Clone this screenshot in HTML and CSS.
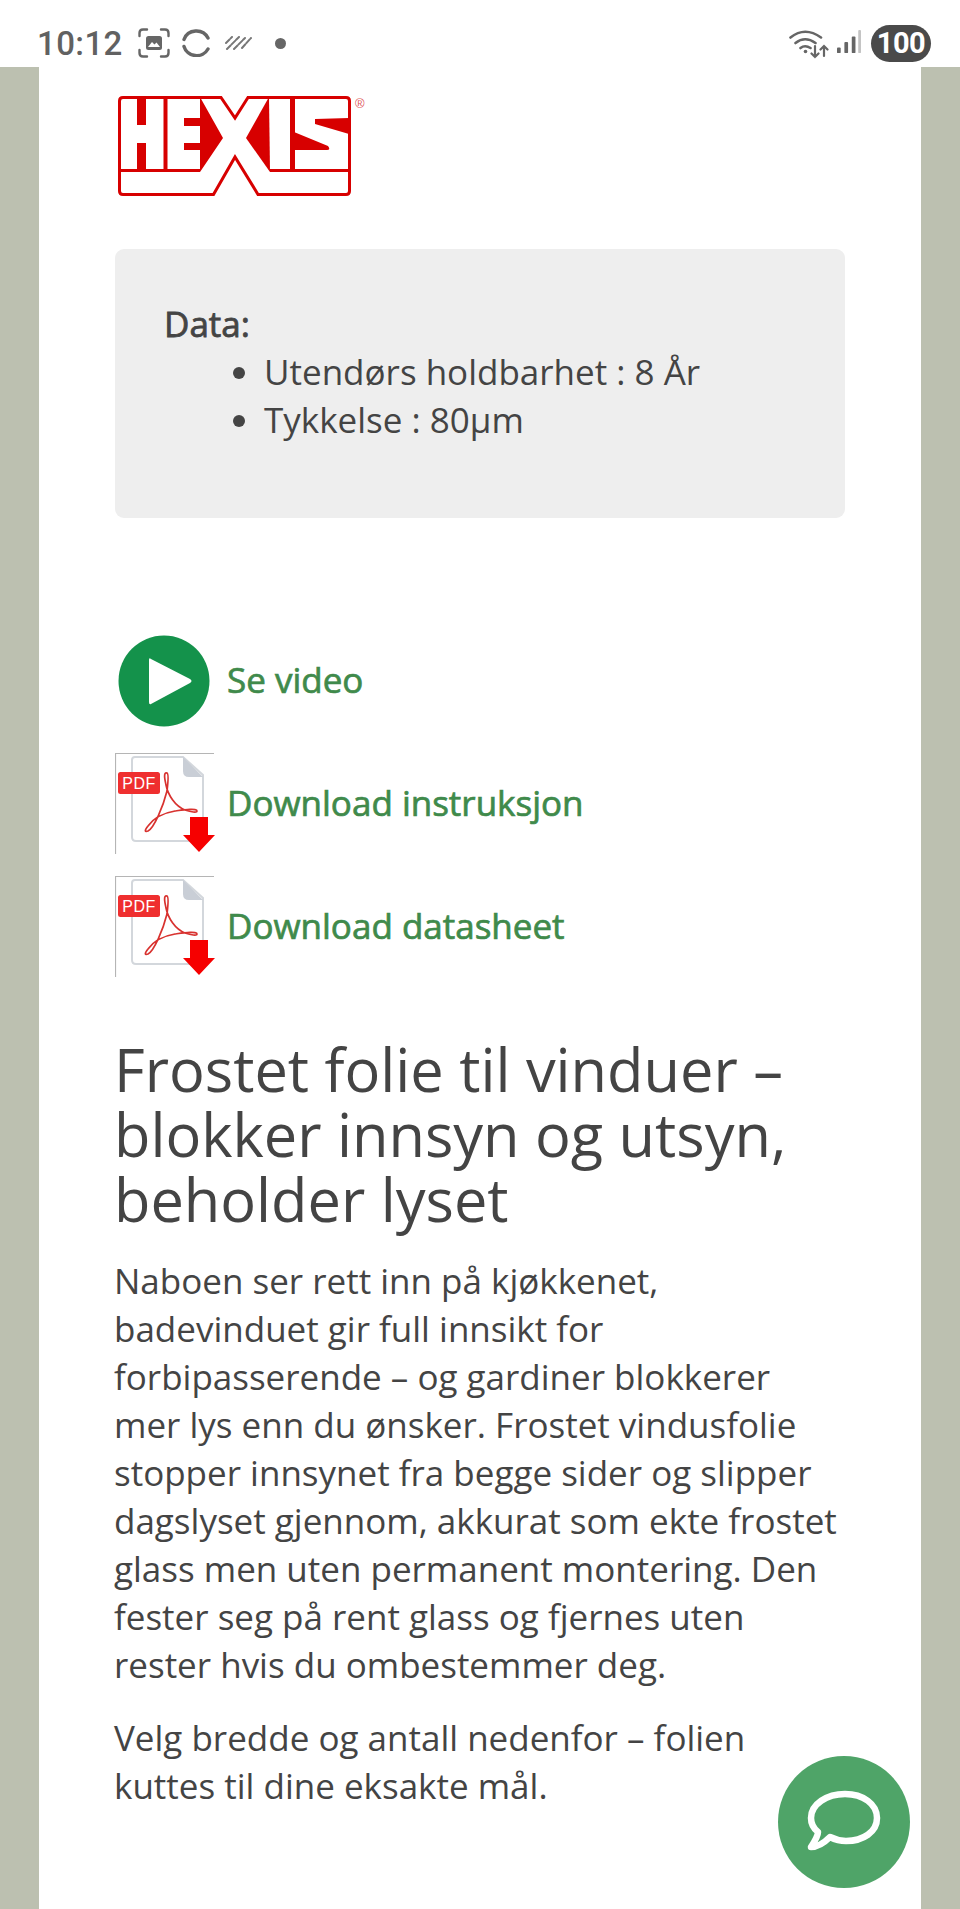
FILE: index.html
```html
<!DOCTYPE html>
<html lang="no">
<head>
<meta charset="utf-8">
<title>Frostet folie til vinduer</title>
<link rel="stylesheet" href="styles.css">
</head>
<body>
<header class="status">
  <div class="status-left">
    <span class="time">10:12</span>
    <svg class="ic-shot" viewBox="0 0 32 30" fill="none" stroke="#666" stroke-width="2.4" stroke-linecap="round">
      <path d="M1.500 8V5Q1.500 1.500 5 1.500H9M23 1.500H27Q30.500 1.500 30.500 5V8M1.500 22V25Q1.500 28.500 5 28.500H9M23 28.500H27Q30.500 28.500 30.500 25V22"/>
      <rect x="8" y="8" width="16" height="14" rx="2.500" fill="#666" stroke="none"/>
      <path d="M10 19L14 14L16.500 16.500L18.500 14.500L22 19Z" fill="#fff" stroke="none"/>
    </svg>
    <svg class="ic-sync" viewBox="0 0 28 28" fill="none" stroke="#666" stroke-width="3.400" stroke-linecap="round">
      <path d="M26 9A13 12.500 0 0 0 2 10.500M2 17.500A13 12.500 0 0 0 26 20"/>
    </svg>
    <svg class="ic-stripes" viewBox="0 0 27 14" fill="none" stroke="#777" stroke-width="2" stroke-linecap="round" stroke-dasharray="5 1.500">
      <path d="M1 7L7 1M2 13L14 1M9 13L20 2M17 12L26 2"/>
    </svg>
    <span class="dot"></span>
  </div>
  <div class="status-right">
    <svg class="ic-wifi" viewBox="0 0 40 30" fill="none" stroke="#666" stroke-width="2.600" stroke-linecap="round">
      <path d="M1.500 8.500Q16-3 32 8.500M6.500 14Q16 6.500 26.500 14M11.500 19Q16 15.500 21.500 19"/>
      <circle cx="16.500" cy="22.500" r="1.800" fill="#666" stroke="none"/>
      <path d="M26 17V28M22.500 24.500L26 28L29.500 24.500M35 27V17M31.500 20.500L35 17L38.500 20.500" stroke-width="2.200"/>
    </svg>
    <svg class="ic-signal" viewBox="0 0 26 26" aria-hidden="true">
      <rect x="0" y="19" width="4" height="6" rx="1" fill="#666"/>
      <rect x="8" y="13" width="4" height="12" rx="1" fill="#666"/>
      <rect x="16" y="7" width="4" height="18" rx="1" fill="#666"/>
      <rect x="23" y="0" width="3" height="25" rx="1" fill="#c4c4c4"/>
    </svg>
    <span class="battery">100</span>
  </div>
</header>

<div class="page">
  <main class="sheet">
    <svg class="logo" viewBox="116 94 250 104">
      <path d="M123 97.500H221L235 118L248 97.500H346Q349.500 97.500 349.500 101V191Q349.500 194.500 346 194.500H258L235 157L213.500 194.500H123Q119.500 194.500 119.500 191V101Q119.500 97.500 123 97.500Z" fill="#fff" stroke="#d70000" stroke-width="3"/>
      <path d="M119.500 170.500H200M270 170.500H349.500" stroke="#d70000" stroke-width="3" fill="none"/>
      <g fill="#d70000">
        <path d="M137 97H146V125H137ZM137 143H146V170H137Z"/>
        <rect x="163.500" y="97" width="4" height="73"/>
        <path d="M200 97L223 138L200 172ZM184 118H202V126H184ZM184 143H202V150H184Z"/>
        <path d="M269 97L246 138L270 172Z"/>
        <rect x="290" y="97" width="5" height="73"/>
        <path d="M315 119L349 118V134L315 124ZM294 132L328 146Q331 150 327 150H294Z"/>
      </g>
      <text class="reg" x="355" y="108">®</text>
    </svg>

    <section class="data">
      <strong class="data-title">Data:</strong>
      <ul class="data-list">
        <li>Utendørs holdbarhet : 8 År</li>
        <li>Tykkelse : 80µm</li>
      </ul>
    </section>

    <nav class="links">
      <a class="link" href="#">
        <svg class="icon" viewBox="0 0 101 101">
          <circle cx="49" cy="51" r="45.500" fill="#14924b"/>
          <path d="M36 29Q34 27 34 30V72Q34 75 36 74L75 53Q78 51 75 49Z" fill="#fff"/>
        </svg>
        <span class="link-text">Se video</span>
      </a>
      <a class="link" href="#">
        <svg class="icon" viewBox="0 0 101 101">
          <path d="M.5 101V.5H99" fill="none" stroke="#b5b5b5" stroke-width="1.200"/>
          <path d="M20 4H68L88 22V84Q88 88 84 88H21Q17 88 17 84V7Q17 4 20 4Z" fill="#fff" stroke="#d3d7dc" stroke-width="2"/>
          <path d="M68 4L88 24H74Q68 24 68 18Z" fill="#c9ced6"/>
          <rect x="3" y="19" width="42" height="22" rx="2.500" fill="#ef2f2f"/>
          <text class="pdf-text" x="24" y="36">PDF</text>
          <path d="M52 20C48 19 50 27 51 32C53 42 60 53 70 57C76 59 82 60 82 58C82 55 68 57 60 58C48 60 38 66 33 73C29 78 30 79 33 78C39 75 48 54 52 38C53 30 54 21 52 20Z" fill="none" stroke="#d8322f" stroke-width="1.700"/>
          <path d="M75 64H93V82H100L84 99L68 82H75Z" fill="#f60000"/>
        </svg>
        <span class="link-text">Download instruksjon</span>
      </a>
      <a class="link" href="#">
        <svg class="icon" viewBox="0 0 101 101">
          <path d="M.5 101V.5H99" fill="none" stroke="#b5b5b5" stroke-width="1.200"/>
          <path d="M20 4H68L88 22V84Q88 88 84 88H21Q17 88 17 84V7Q17 4 20 4Z" fill="#fff" stroke="#d3d7dc" stroke-width="2"/>
          <path d="M68 4L88 24H74Q68 24 68 18Z" fill="#c9ced6"/>
          <rect x="3" y="19" width="42" height="22" rx="2.500" fill="#ef2f2f"/>
          <text class="pdf-text" x="24" y="36">PDF</text>
          <path d="M52 20C48 19 50 27 51 32C53 42 60 53 70 57C76 59 82 60 82 58C82 55 68 57 60 58C48 60 38 66 33 73C29 78 30 79 33 78C39 75 48 54 52 38C53 30 54 21 52 20Z" fill="none" stroke="#d8322f" stroke-width="1.700"/>
          <path d="M75 64H93V82H100L84 99L68 82H75Z" fill="#f60000"/>
        </svg>
        <span class="link-text">Download datasheet</span>
      </a>
    </nav>

    <h1 class="title">Frostet folie til vinduer – blokker innsyn og utsyn, beholder lyset</h1>
    <p class="body-text">Naboen ser rett inn på kjøkkenet, badevinduet gir full innsikt for forbipasserende – og gardiner blokkerer mer lys enn du ønsker. Frostet vindusfolie stopper innsynet fra begge sider og slipper dagslyset gjennom, akkurat som ekte frostet glass men uten permanent montering. Den fester seg på rent glass og fjernes uten rester hvis du ombestemmer deg.</p>
    <p class="body-text">Velg bredde og antall nedenfor – folien kuttes til dine eksakte mål.</p>
  </main>
</div>

<button class="chat" aria-label="Chat">
  <svg viewBox="0 0 74 64" fill="none" stroke="#fff" stroke-width="6.500" stroke-linejoin="round">
    <path d="M38 4C56 4 70 14 70 28C70 42 56 51 39 51C31 51 27 49 23 47C18 52 11 57 4 57C8 51 11 46 11 42C6 38 4 33 4 28C4 14 20 4 38 4Z"/>
  </svg>
</button>
</body>
</html>
```
FILE: styles.css
```css
* { box-sizing: border-box; }
html, body { margin: 0; padding: 0; }
body {
  width: 960px;
  height: 1909px;
  overflow: hidden;
  position: relative;
  background: #fff;
  font-family: "Open Sans", sans-serif;
  color: #444;
}
.status {
  height: 67px;
  background: #fff;
  display: flex;
  justify-content: space-between;
  align-items: center;
  padding: 19px 29px 0 37px;
}
.status-left, .status-right { display: flex; align-items: center; }
.time {
  font-family: Roboto, sans-serif;
  font-weight: 500;
  font-size: 33px;
  letter-spacing: 0.4px;
  color: #616161;
  width: 101px;
}
.ic-shot { width: 32px; height: 30px; }
.ic-sync { width: 28px; height: 28px; margin-left: 12px; }
.ic-stripes { width: 27px; height: 14px; margin-left: 15px; }
.dot { width: 11px; height: 11px; border-radius: 50%; background: #666; margin-left: 23px; }
.ic-wifi { width: 40px; height: 30px; margin-top: 2px; }
.ic-signal { width: 24px; height: 26px; margin-left: 8px; margin-top: -3px; }
.battery {
  margin-left: 10px;
  width: 60px;
  height: 37px;
  border-radius: 19px;
  background: #4a4a4a;
  color: #fff;
  font-family: Roboto, sans-serif;
  font-weight: 700;
  font-size: 29px;
  line-height: 37px;
  letter-spacing: -0.5px;
  text-align: center;
}
.page { background: #bcc0b0; padding: 0 39px; }
.sheet {
  background: #fff;
  min-height: 1842px;
  padding: 27px 76px 0;
}
.logo { display: block; width: 250px; height: 104px; margin-left: 1px; }
.reg { font-family: "Liberation Sans", sans-serif; font-size: 13px; fill: #e0575b; }
.data {
  margin-top: 51px;
  height: 269px;
  background: #eee;
  border-radius: 9px;
  padding: 51px 50px 0 49px;
  font-size: 35px;
  line-height: 48px;
}
.data-title { display: block; font-weight: 400; -webkit-text-stroke: 0.8px #444; }
.data-list { margin: 0; padding: 0 0 0 100px; }
.links { margin-top: 112px; display: flex; flex-direction: column; gap: 22px; }
.link {
  display: flex;
  align-items: center;
  gap: 11px;
  height: 101px;
  color: #3f8a4b;
  font-size: 35px;
  text-decoration: none;
}
.link-text { padding-bottom: 2px; -webkit-text-stroke: 0.7px #3f8a4b; }
.icon { width: 101px; height: 101px; flex: none; }
.pdf-text { font-family: "Liberation Sans", sans-serif; font-size: 16px; fill: #fff; text-anchor: middle; letter-spacing: 0.5px; }
.title {
  margin: 59px 0 26px -1px;
  font-size: 59.5px;
  line-height: 65px;
  font-weight: 400;
  color: #444;
}
.body-text {
  margin: 0 0 25px -1px;
  font-size: 35px;
  line-height: 48px;
}
.chat {
  position: absolute;
  left: 778px;
  top: 1756px;
  width: 132px;
  height: 132px;
  border: 0;
  border-radius: 50%;
  background: #4fa468;
  padding: 0;
  display: flex;
  align-items: center;
  justify-content: center;
}
.chat svg { width: 74px; height: 64px; }
```
